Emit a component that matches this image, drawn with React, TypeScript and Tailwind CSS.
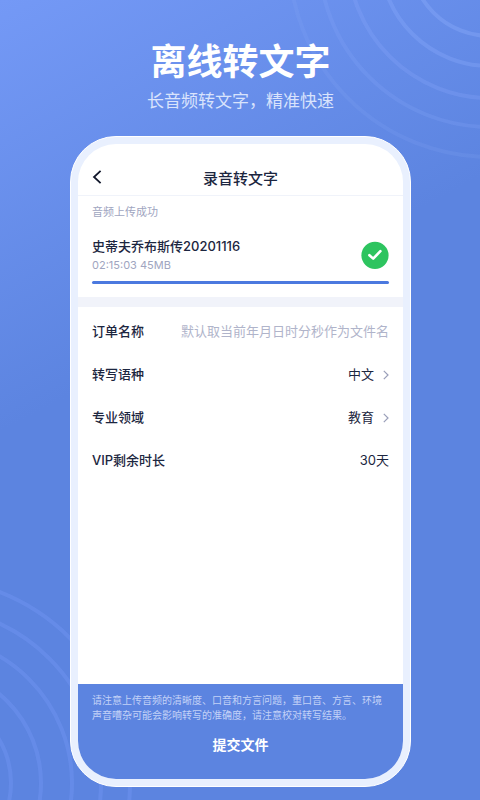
import { useState } from "react"

const noticeText =
  "请注意上传音频的清晰度、口音和方言问题，重口音、方言、环境声音嘈杂可能会影响转写的准确度，请注意校对转写结果。"

const topRings = [80, 110, 142, 171, 201]
const bottomRings = [86, 116, 147, 176, 205]

function Ripples() {
  return (
    <>
      <svg className="absolute right-0 top-0" width="200" height="170" viewBox="280 0 200 170" fill="none" aria-hidden="true">
        {topRings.map((r) => (
          <circle key={r} cx="490" cy="-44" r={r} stroke="#8aa9fb" strokeOpacity={0.56 - r / 500} strokeWidth="4" />
        ))}
      </svg>
      <svg className="absolute bottom-0 left-0" width="140" height="220" viewBox="0 580 140 220" fill="none" aria-hidden="true">
        {bottomRings.map((r) => (
          <circle key={r} cx="-75" cy="783" r={r} stroke="#7396f4" strokeOpacity="0.42" strokeWidth="4" />
        ))}
      </svg>
    </>
  )
}

function ChevronIcon() {
  return (
    <svg className="pointer-events-none h-[10px] w-[6px]" viewBox="0 0 6 10" fill="none" aria-hidden="true">
      <path d="M0.8 0.8L5 5L0.8 9.2" stroke="#9a9fb9" strokeWidth="1.2" />
    </svg>
  )
}

interface SelectRowProps {
  id: string
  label: string
  options: string[]
}

function SelectRow({ id, label, options }: SelectRowProps) {
  const [value, setValue] = useState(options[0])

  return (
    <div className="flex h-[43px] items-center justify-between">
      <label htmlFor={id} className="font-medium">
        {label}
      </label>
      <div className="flex items-center gap-2">
        <select
          id={id}
          value={value}
          onChange={(e) => setValue(e.target.value)}
          className="appearance-none bg-transparent outline-none"
        >
          {options.map((item) => (
            <option key={item}>{item}</option>
          ))}
        </select>
        <ChevronIcon />
      </div>
    </div>
  )
}

function UploadCard() {
  return (
    <section className="px-[14px] pb-[13px] pt-2">
      <p className="text-[11px] leading-4 text-[#a0a5bf]">音频上传成功</p>
      <div className="mt-4 flex items-center justify-between">
        <div>
          <h3 className="text-[13px] font-medium leading-5">史蒂夫乔布斯传20201116</h3>
          <p className="text-[11px] leading-[18px] text-[#a0a5bf]">02:15:03 45MB</p>
        </div>
        <svg className="size-7" viewBox="0 0 28 28" fill="none" aria-hidden="true">
          <circle cx="14" cy="14.3" r="13.6" fill="#2dc45f" />
          <path d="M8.4 14.2L12.2 17.6L19.4 10.2" stroke="#fff" strokeWidth="2.6" strokeLinecap="round" strokeLinejoin="round" />
        </svg>
      </div>
      <div
        role="progressbar"
        aria-label="上传进度"
        aria-valuenow={100}
        className="mt-[7px] h-[3px] rounded-full bg-[#4b79df]"
      />
    </section>
  )
}

export default function App() {
  return (
    <main className="relative flex min-h-screen flex-col overflow-hidden bg-[linear-gradient(152deg,#7499f6_0%,#5c84e0_41%)] pb-[13px] pl-[70px] pr-[69px] pt-[35px] font-['Inter','Noto_Sans_CJK_SC',sans-serif] text-[#1c2640]">
      <Ripples />

      <header className="relative text-center text-white">
        <h1 className="text-[36px] font-bold leading-[54px]">离线转文字</h1>
        <p className="text-[17px] leading-6 text-[#d9e3fc]">长音频转文字，精准快速</p>
      </header>

      <div className="relative mt-[23px] flex flex-1 flex-col rounded-[46px] border border-white bg-[#e9f0fe] p-[7px]">
        <div className="flex flex-1 flex-col overflow-hidden rounded-[38px] bg-white">
          <div className="grid h-[52px] grid-cols-[1fr_auto_1fr] items-center border-b border-[#f0f3fa] px-[14px] pt-[18px]">
            <button type="button" aria-label="返回" className="flex size-6 items-center pb-1">
              <svg className="h-[14px] w-[10px]" viewBox="0 0 10 14" fill="none" aria-hidden="true">
                <path d="M8.6 0.8L2 7L8.6 13.2" stroke="#12182c" strokeWidth="1.8" />
              </svg>
            </button>
            <h2 className="text-[15px] font-medium leading-6">录音转文字</h2>
          </div>

          <UploadCard />

          <div className="h-[10px] bg-[#f1f3fa]" />

          <form id="order" className="px-[14px] pt-[3px] text-[13px]" onSubmit={(e) => e.preventDefault()}>
            <div className="flex h-[43px] items-center justify-between">
              <label htmlFor="name" className="shrink-0 font-medium">
                订单名称
              </label>
              <input
                id="name"
                type="text"
                placeholder="默认取当前年月日时分秒作为文件名"
                className="w-0 flex-1 bg-transparent text-right outline-none placeholder:text-[#b0b4ca]"
              />
            </div>
            <SelectRow id="language" label="转写语种" options={["中文", "英文"]} />
            <SelectRow id="field" label="专业领域" options={["教育", "医疗"]} />
            <div className="flex h-[43px] items-center justify-between">
              <span className="font-medium">VIP剩余时长</span>
              <span>30天</span>
            </div>
          </form>

          <footer className="mt-auto bg-[#5c84e0] px-[14px] pb-5 pt-[9px] text-center text-white">
            <p className="text-left text-[10px] leading-[15px] text-[#c3d2f7]">{noticeText}</p>
            <button type="submit" form="order" className="mt-2 px-4 text-[14px] font-bold leading-7">
              提交文件
            </button>
          </footer>
        </div>
      </div>
    </main>
  )
}
